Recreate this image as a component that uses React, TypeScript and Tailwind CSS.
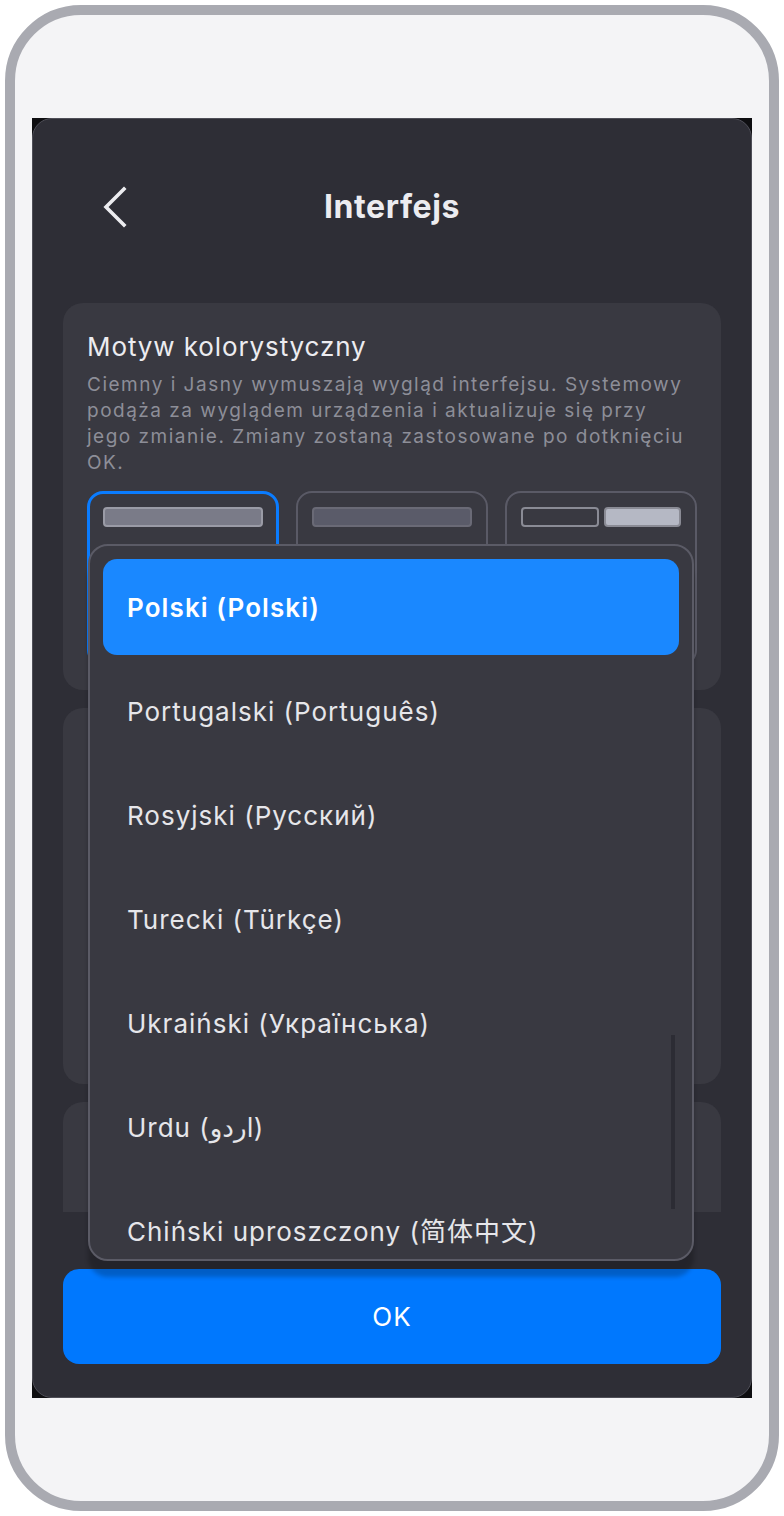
import React from "react";

const FONT = { fontFamily: "Inter, 'Noto Sans', 'DejaVu Sans', 'Noto Sans CJK SC', sans-serif" };

const languages = [
  "Polski (Polski)",
  "Portugalski (Português)",
  "Rosyjski (Русский)",
  "Turecki (Türkçe)",
  "Ukraiński (Українська)",
  "Urdu (اردو)",
  "Chiński uproszczony (简体中文)",
];

export default function App() {
  return (
    <div className="w-[784px] h-[1516px] bg-white" style={FONT}>
      <div className="ml-[5px] mt-[5px] w-[774px] h-[1506px] rounded-[76px] border-[10px] border-[#a9aab1] bg-[#f4f4f6] pt-[103px] pl-[17px]">
        <div className="w-[720px] h-[1280px] bg-[#0e0e11]">
          <div className="relative w-[720px] h-[1280px] rounded-[20px] border border-[#4f4f58] bg-[#2e2e36] flex flex-col overflow-hidden">
            {/* header */}
            <div className="h-[184px] shrink-0 pt-[62px] px-[30px] flex items-start">
              <div className="relative w-full h-[52px] flex items-center justify-center">
                <svg className="absolute left-[38px] top-[5px]" width="28" height="42" viewBox="0 0 28 42" fill="none">
                  <path d="M23 3 L5 21 L23 39" stroke="#ececf0" strokeWidth="3.6" strokeLinecap="square" strokeLinejoin="miter" />
                </svg>
                <span className="text-[32px] leading-[52px] font-bold text-[#ececf0] tracking-[0.6px]">Interfejs</span>
              </div>
            </div>
            {/* scroll area */}
            <div className="h-[909px] shrink-0 overflow-hidden px-[30px] flex flex-col gap-[18px]">
              <div className="shrink-0 h-[387px] rounded-[20px] bg-[#393941] pt-[27px] px-[24px]">
                <div className="text-[26px] leading-[34px] text-[#ececf0] tracking-[0.9px]">Motyw kolorystyczny</div>
                <div className="mt-[8px] text-[19px] leading-[26px] text-[#8d8e98] tracking-[1.5px]">
                  Ciemny i Jasny wymuszają wygląd interfejsu. Systemowy podąża za wyglądem urządzenia i aktualizuje się przy jego zmianie. Zmiany zostaną zastosowane po dotknięciu OK.
                </div>
                <div className="mt-[15px] grid grid-cols-3 gap-[17px]">
                  <div className="h-[175px] rounded-[16px] border-[3px] border-[#0a7cff] pt-[13px] px-[13px]">
                    <div className="h-[20px] rounded-[4px] border-2 border-[#9a9ba6] bg-[#7a7b88]" />
                  </div>
                  <div className="h-[175px] rounded-[16px] border-2 border-[#5a5a66] pt-[14px] px-[14px]">
                    <div className="h-[20px] rounded-[4px] border-2 border-[#6a6a76] bg-[#5a5b69]" />
                  </div>
                  <div className="h-[175px] rounded-[16px] border-2 border-[#5a5a66] pt-[14px] px-[14px] flex gap-[5px] items-start">
                    <div className="flex-1 h-[20px] rounded-[4px] border-2 border-[#8a8b95] bg-[#393941]" />
                    <div className="flex-1 h-[20px] rounded-[4px] border-2 border-[#8a8b95] bg-[#b5b8c4]" />
                  </div>
                </div>
              </div>
              <div className="shrink-0 h-[376px] rounded-[20px] bg-[#393941]" />
              <div className="shrink-0 h-[376px] rounded-[20px] bg-[#393941]" />
            </div>
            {/* footer */}
            <div className="mt-[57px] px-[30px]">
              <div className="h-[95px] rounded-[16px] bg-[#0078fe] flex items-center justify-center text-[26px] text-white tracking-[1.2px]">OK</div>
            </div>

            {/* dropdown */}
            <div className="absolute left-[55px] top-[425px] w-[606px] h-[717px] rounded-[20px] border-2 border-[#5b5b66] bg-[#393941] shadow-[0_16px_4px_rgba(0,0,0,0.22)] overflow-hidden">
              <div className="p-[13px] flex flex-col gap-[8px]">
                {languages.map((l, i) => (
                  <div
                    key={l}
                    className={
                      i === 0
                        ? "h-[96px] shrink-0 rounded-[14px] bg-[#1a88ff] px-[24px] flex items-center text-[26px] font-semibold text-white tracking-[1.1px]"
                        : "h-[96px] shrink-0 rounded-[14px] px-[24px] flex items-center text-[26px] text-[#e6e6ea] tracking-[1px]"
                    }
                  >
                    {l}
                  </div>
                ))}
              </div>
              <div className="absolute left-[581px] top-[489px] w-[4px] h-[174px] bg-[#2c2c34]" />
            </div>
          </div>
        </div>
      </div>
    </div>
  );
}
